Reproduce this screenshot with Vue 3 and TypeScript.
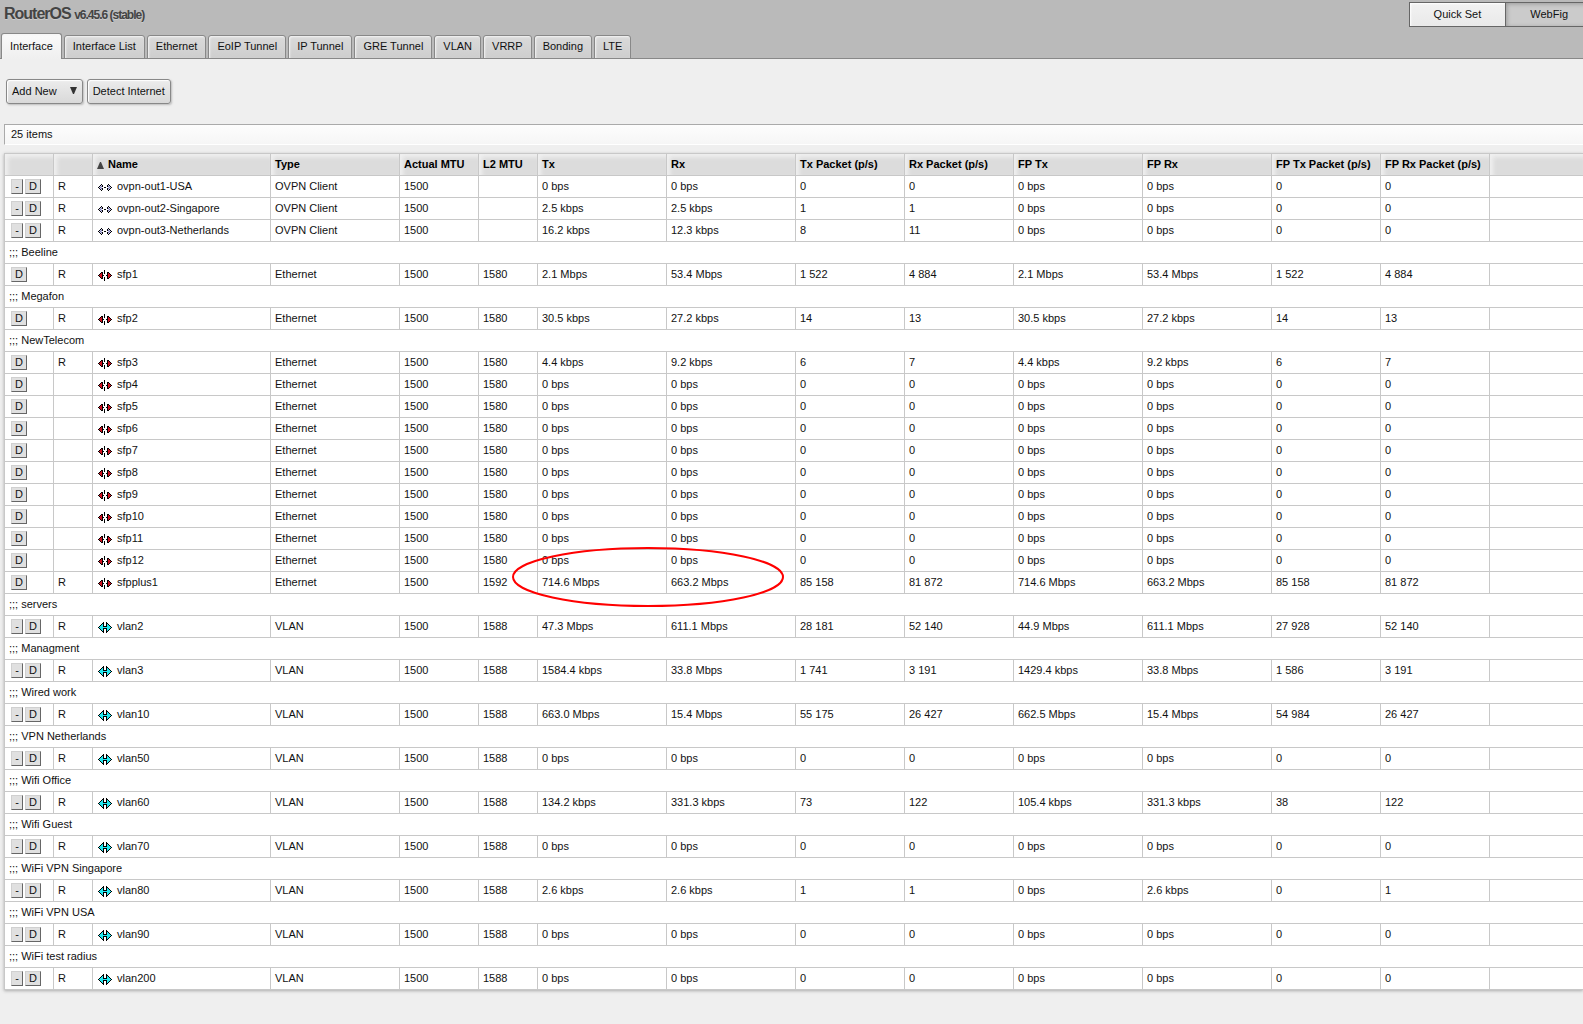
<script setup lang="ts">
import { ref } from 'vue'

type Kind = 'ovpn' | 'eth' | 'vlan'

interface Row {
  comment?: string
  running: boolean
  kind: Kind
  name: string
  l2: string
  stats: string[]
  marked?: boolean
}

const tabs = ['Interface', 'Interface List', 'Ethernet', 'EoIP Tunnel', 'IP Tunnel', 'GRE Tunnel', 'VLAN', 'VRRP', 'Bonding', 'LTE']
const activeTab = ref('Interface')

const statHeads = ['Tx', 'Rx', 'Tx Packet (p/s)', 'Rx Packet (p/s)', 'FP Tx', 'FP Rx', 'FP Tx Packet (p/s)', 'FP Rx Packet (p/s)']
const types: Record<Kind, string> = { ovpn: 'OVPN Client', eth: 'Ethernet', vlan: 'VLAN' }
const idle = ['0 bps', '0 bps', '0', '0', '0 bps', '0 bps', '0', '0']

// Pixel maps of the interface icons: one character per pixel, '.' is empty.
const bitmaps: Record<Kind, string[]> = {
  ovpn: [
    '..............',
    '..............',
    '...k......k...',
    '..klk....klk..',
    '.klbk....kblk.',
    'klbl..kk..lblk',
    '.klbk....kblk.',
    '..klk....klk..',
    '...k......k...',
    '..............',
    '..............'
  ],
  eth: [
    '......k.......',
    '......k.......',
    '...kk.k..kk...',
    '..krk.k..krk..',
    '.krrk....krrk.',
    'krrrkk..kkrrrk',
    '.krrk....krrk.',
    '..krk.k..krk..',
    '...kk.k..kk...',
    '......k.......',
    '......k.......'
  ],
  vlan: [
    '.....k..k.....',
    '....kk..kk....',
    '...kck..kck...',
    '..kcck..kcck..',
    '.kccckkkkccck.',
    'kcccccccccccck',
    '.kccckkkkccck.',
    '..kcck..kcck..',
    '...kck..kck...',
    '....kk..kk....',
    '.....k..k.....'
  ]
}
const inks: Record<string, string> = { k: '#000000', r: '#d01020', c: '#20e8f0', l: '#c8c8f0', b: '#8080b0' }

interface Dot { x: number; y: number; fill: string }
function toDots(map: string[]): Dot[] {
  return map.flatMap((line, y) => [...line].flatMap((ch, x) => (ch === '.' ? [] : [{ x, y, fill: inks[ch] }])))
}
const icons: Record<Kind, Dot[]> = { ovpn: toDots(bitmaps.ovpn), eth: toDots(bitmaps.eth), vlan: toDots(bitmaps.vlan) }

function ovpn(name: string, stats: string[]): Row {
  return { running: true, kind: 'ovpn', name, l2: '', stats }
}
function eth(name: string, stats: string[] = idle, running = false, comment?: string): Row {
  return { running, kind: 'eth', name, l2: '1580', stats, comment }
}
function vlan(id: number, comment: string, stats: string[] = idle): Row {
  return { running: true, kind: 'vlan', name: `vlan${id}`, l2: '1588', stats, comment }
}

const rows: Row[] = [
  ovpn('ovpn-out1-USA', idle),
  ovpn('ovpn-out2-Singapore', ['2.5 kbps', '2.5 kbps', '1', '1', '0 bps', '0 bps', '0', '0']),
  ovpn('ovpn-out3-Netherlands', ['16.2 kbps', '12.3 kbps', '8', '11', '0 bps', '0 bps', '0', '0']),
  eth('sfp1', ['2.1 Mbps', '53.4 Mbps', '1 522', '4 884', '2.1 Mbps', '53.4 Mbps', '1 522', '4 884'], true, 'Beeline'),
  eth('sfp2', ['30.5 kbps', '27.2 kbps', '14', '13', '30.5 kbps', '27.2 kbps', '14', '13'], true, 'Megafon'),
  eth('sfp3', ['4.4 kbps', '9.2 kbps', '6', '7', '4.4 kbps', '9.2 kbps', '6', '7'], true, 'NewTelecom'),
  ...[4, 5, 6, 7, 8, 9, 10, 11, 12].map((n) => eth(`sfp${n}`)),
  {
    running: true,
    kind: 'eth',
    name: 'sfpplus1',
    l2: '1592',
    stats: ['714.6 Mbps', '663.2 Mbps', '85 158', '81 872', '714.6 Mbps', '663.2 Mbps', '85 158', '81 872'],
    marked: true
  },
  vlan(2, 'servers', ['47.3 Mbps', '611.1 Mbps', '28 181', '52 140', '44.9 Mbps', '611.1 Mbps', '27 928', '52 140']),
  vlan(3, 'Managment', ['1584.4 kbps', '33.8 Mbps', '1 741', '3 191', '1429.4 kbps', '33.8 Mbps', '1 586', '3 191']),
  vlan(10, 'Wired work', ['663.0 Mbps', '15.4 Mbps', '55 175', '26 427', '662.5 Mbps', '15.4 Mbps', '54 984', '26 427']),
  vlan(50, 'VPN Netherlands'),
  vlan(60, 'Wifi Office', ['134.2 kbps', '331.3 kbps', '73', '122', '105.4 kbps', '331.3 kbps', '38', '122']),
  vlan(70, 'Wifi Guest'),
  vlan(80, 'WiFi VPN Singapore', ['2.6 kbps', '2.6 kbps', '1', '1', '0 bps', '2.6 kbps', '0', '1']),
  vlan(90, 'WiFi VPN USA'),
  vlan(200, 'WiFi test radius')
]
</script>

<template>
  <div class="page">
    <header class="top">
      <div class="brand-bar">
        <h1 class="brand">RouterOS <small>v6.45.6 (stable)</small></h1>
        <nav class="modes">
          <button type="button" class="mode">Quick Set</button>
          <button type="button" class="mode pressed">WebFig</button>
        </nav>
      </div>
      <nav class="tabs">
        <a v-for="tab in tabs" :key="tab" href="#" class="tab" :class="{ active: tab === activeTab }" @click.prevent="activeTab = tab">{{ tab }}</a>
      </nav>
    </header>

    <main class="content">
      <div class="toolbar">
        <button type="button" class="btn">
          Add New
          <svg class="caret" width="7" height="7" viewBox="0 0 7 7"><path d="M0 0H7L4 7H3Z" fill="#333" /></svg>
        </button>
        <button type="button" class="btn">Detect Internet</button>
      </div>

      <div class="count">25 items</div>

      <table class="grid">
        <colgroup>
          <col class="w-actions" />
          <col class="w-flag" />
          <col class="w-name" />
          <col class="w-rate" />
          <col class="w-mtu" />
          <col class="w-l2" />
          <col class="w-rate" />
          <col class="w-rate" />
          <col class="w-packet" />
          <col class="w-packet" />
          <col class="w-rate" />
          <col class="w-rate" />
          <col class="w-packet" />
          <col class="w-packet" />
          <col />
        </colgroup>
        <thead>
          <tr>
            <th></th>
            <th></th>
            <th>
              <svg class="sort" width="7" height="7" viewBox="0 0 7 7"><path d="M3 0H4L7 7H0Z" fill="#444" /></svg>Name
            </th>
            <th>Type</th>
            <th>Actual MTU</th>
            <th>L2 MTU</th>
            <th v-for="head in statHeads" :key="head">{{ head }}</th>
            <th></th>
          </tr>
        </thead>
        <tbody>
          <template v-for="row in rows" :key="row.name">
            <tr v-if="row.comment">
              <td colspan="15">;;; {{ row.comment }}</td>
            </tr>
            <tr>
              <td class="actions">
                <div class="action-set">
                  <button v-if="row.kind !== 'eth'" type="button" class="mini remove">-</button>
                  <button type="button" class="mini disable">D</button>
                </div>
              </td>
              <td>{{ row.running ? 'R' : '' }}</td>
              <td>
                <div class="iface">
                  <svg class="icon" width="14" height="11" viewBox="0 0 14 11" shape-rendering="crispEdges">
                    <rect v-for="d in icons[row.kind]" :key="`${d.x}-${d.y}`" :x="d.x" :y="d.y" width="1" height="1" :fill="d.fill" />
                  </svg>
                  {{ row.name }}
                </div>
              </td>
              <td>{{ types[row.kind] }}</td>
              <td>1500</td>
              <td>{{ row.l2 }}</td>
              <td v-for="(stat, i) in row.stats" :key="i" :class="{ marked: row.marked && i === 0 }">
                {{ stat }}
                <svg v-if="row.marked && i === 0" class="ring" width="272" height="62" viewBox="0 0 272 62">
                  <ellipse cx="136" cy="31" rx="135" ry="29" fill="none" stroke="#f00" stroke-width="2" />
                </svg>
              </td>
              <td></td>
            </tr>
          </template>
        </tbody>
      </table>
    </main>
  </div>
</template>

<style>
body {
  margin: 0;
  background: #efefef;
}
</style>

<style scoped>
.page {
  overflow: hidden;
  min-height: 100vh;
  font: 11px/14px "Liberation Sans", Arial, sans-serif;
  color: #111;
}
button {
  font: inherit;
  color: inherit;
  margin: 0;
}
.top {
  background: #bababa;
}
.brand-bar {
  display: flex;
  justify-content: space-between;
  height: 33px;
}
.brand {
  margin: 0;
  padding: 4px 4px 0;
  font-size: 16px;
  line-height: 20px;
  letter-spacing: -1px;
  color: #444;
  text-shadow: 0 1px 0 #ccc;
}
.brand small {
  font-size: 12px;
}
.modes {
  display: flex;
  align-items: flex-start;
  padding-top: 2px;
  margin-right: -10px;
}
.mode {
  height: 25px;
  padding: 0 24px 2px;
  border: 1px solid #666;
  background: linear-gradient(#f2f2f2, #e9e9e9);
  box-shadow: inset 1px 1px 2px #fff;
}
.mode.pressed {
  margin-left: -1px;
  background: #cbcbcb;
  box-shadow: inset 1px 1px 4px #999;
}
.tabs {
  display: flex;
  align-items: flex-end;
  gap: 2px;
  height: 26px;
  padding-left: 1px;
  box-shadow: inset 0 -1px #888;
}
.tab {
  box-sizing: border-box;
  height: 24px;
  padding: 3px 8px;
  border: 1px solid #888;
  border-radius: 3px 3px 0 0;
  background: linear-gradient(#dadada, #cecece);
  box-shadow: inset 1px 1px 2px #f4f4f4;
  color: #111;
  text-decoration: none;
}
.tab.active {
  height: 26px;
  padding: 5px 8px;
  border-bottom: 0;
  background: linear-gradient(#fafafa, #efefef);
}
.content {
  padding: 20px 0 0 4px;
}
.toolbar {
  display: flex;
  gap: 4px;
  padding: 0 2px;
}
.btn {
  display: flex;
  align-items: center;
  gap: 13px;
  height: 25px;
  padding: 0 5px 2px;
  border: 1px solid #888;
  border-radius: 3px;
  background: linear-gradient(#ececec, #d9d9d9);
  box-shadow: inset 1px 1px 1px #fff, 1px 1px 2px #bbb;
}
.count {
  margin-top: 20px;
  padding: 2px 6px 3px;
  border: solid #aaa;
  border-width: 1px 0 0 1px;
  border-bottom: 1px solid #fff;
  background: linear-gradient(#fdfdfd, #f6f6f6);
}
.grid {
  width: 100%;
  margin-top: 8px;
  table-layout: fixed;
  border-collapse: collapse;
  background: #fff;
  box-shadow: 0 1px 3px #aaa;
}
.w-actions { width: 49px; }
.w-flag { width: 39px; }
.w-name { width: 178px; }
.w-rate { width: 129px; }
.w-mtu { width: 79px; }
.w-l2 { width: 59px; }
.w-packet { width: 109px; }
th,
td {
  height: 19px;
  padding: 0 4px 2px;
  border: 1px solid #c8c8c8;
  text-align: left;
  white-space: nowrap;
}
th:last-child,
td:last-child {
  border-right: 0;
}
th {
  background: #dcdcdc;
  box-shadow: inset 3px 3px 4px #f0f0f0;
  color: #000;
}
.sort {
  margin-right: 4px;
  vertical-align: -1px;
}
.actions {
  height: 21px;
  padding: 0 0 0 6px;
}
.action-set {
  display: flex;
  gap: 2px;
}
.mini {
  height: 15px;
  padding: 0;
  border: 1px solid;
  border-color: #d0d0d0 #666 #666 #d0d0d0;
  background: #e0e0e0;
  line-height: 13px;
}
.remove { width: 12px; }
.disable { width: 16px; }
.iface {
  display: flex;
  align-items: flex-end;
  gap: 5px;
  padding-left: 1px;
}
.marked {
  position: relative;
}
.ring {
  position: absolute;
  left: -26px;
  top: -26px;
  pointer-events: none;
}
</style>
